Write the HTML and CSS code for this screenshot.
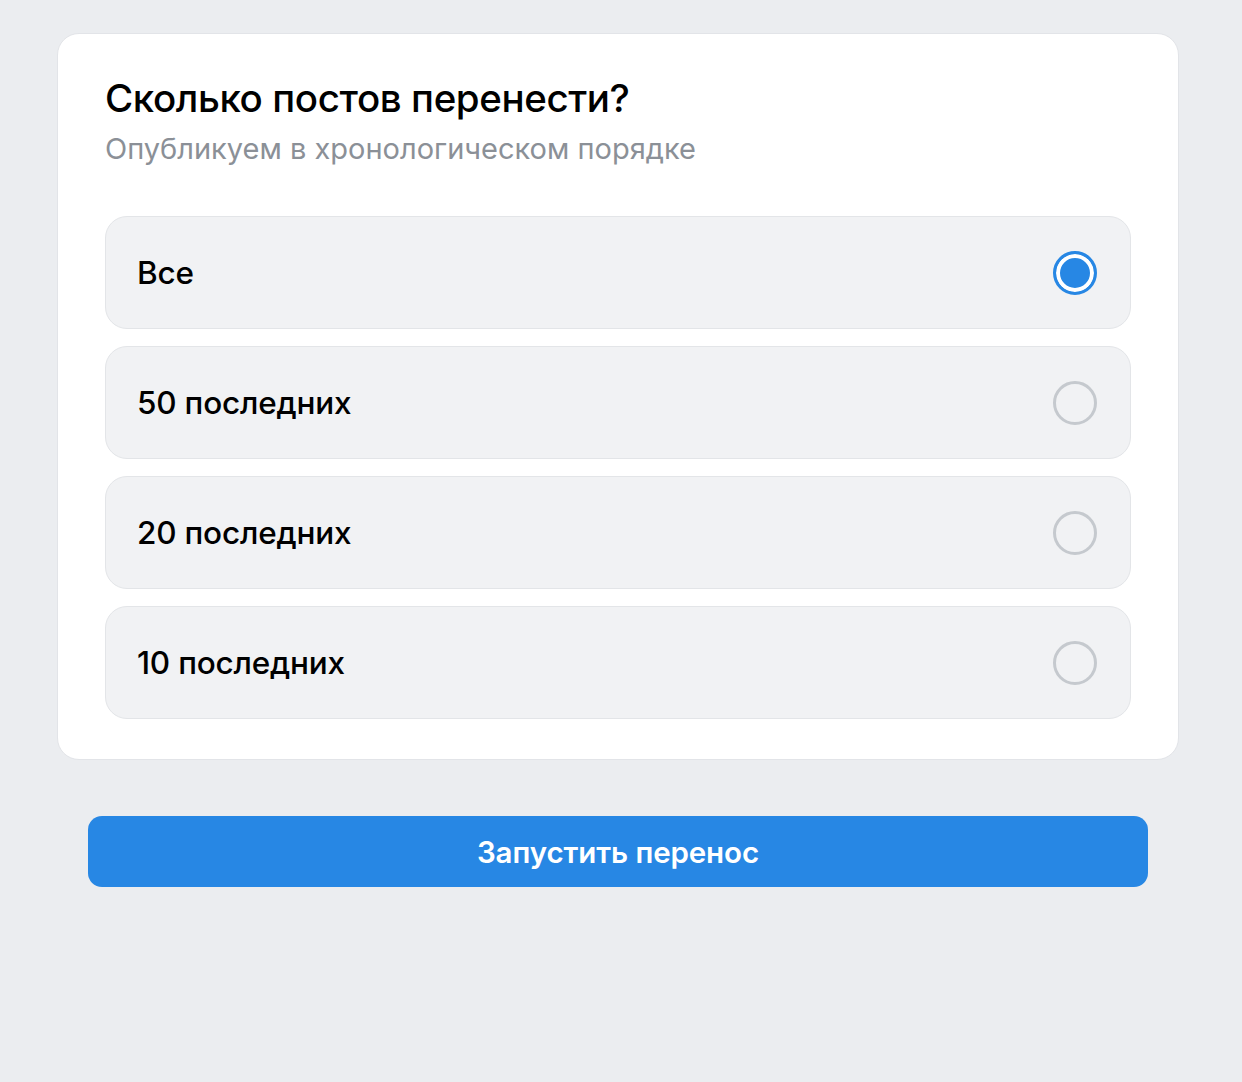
FILE: index.html
```html
<!DOCTYPE html>
<html lang="ru">
<head>
<meta charset="utf-8">
<title>Перенос постов</title>
<link rel="stylesheet" href="styles.css">
</head>
<body>
<main class="page">
  <section class="card">
    <h1 class="title">Сколько постов перенести?</h1>
    <p class="subtitle">Опубликуем в хронологическом порядке</p>
    <div class="options">
      <label class="option">
        <span class="option-label">Все</span>
        <input type="radio" name="count" class="radio-input" checked>
        <span class="radio radio-checked"></span>
      </label>
      <label class="option">
        <span class="option-label">50 последних</span>
        <input type="radio" name="count" class="radio-input">
        <span class="radio"></span>
      </label>
      <label class="option">
        <span class="option-label">20 последних</span>
        <input type="radio" name="count" class="radio-input">
        <span class="radio"></span>
      </label>
      <label class="option">
        <span class="option-label">10 последних</span>
        <input type="radio" name="count" class="radio-input">
        <span class="radio"></span>
      </label>
    </div>
  </section>
  <button class="start-btn" type="button">Запустить перенос</button>
</main>
</body>
</html>
```

FILE: styles.css
```css
html, body {
  margin: 0;
  padding: 0;
  background: #ebedf0;
}
body {
  font-family: Inter, "Noto Sans", "DejaVu Sans", sans-serif;
  color: #000;
}
.page {
  width: 1122px;
  padding: 33px 0 0 57px;
  display: flex;
  flex-direction: column;
}
.card {
  background: #fff;
  border: 1px solid #e2e4e8;
  border-radius: 22px;
  padding: 40px 47px 40px 47px;
}
.title {
  margin: 0;
  font-size: 38.5px;
  line-height: 48px;
  font-weight: 500;
  letter-spacing: -0.4px;
}
.subtitle {
  margin: 8px 0 0;
  font-size: 29px;
  line-height: 38px;
  color: #8b9097;
  font-weight: 400;
}
.options {
  margin-top: 48px;
  display: flex;
  flex-direction: column;
  gap: 17px;
}
.option {
  height: 111px;
  box-sizing: content-box;
  display: flex;
  align-items: center;
  justify-content: space-between;
  background: #f1f2f4;
  border: 1px solid #e3e5e8;
  border-radius: 22px;
  padding: 0 33px 0 31px;
}
.option-label {
  font-size: 31.5px;
  font-weight: 500;
  letter-spacing: -0.2px;
}
.radio-input {
  display: none;
}
.radio {
  width: 44px;
  height: 44px;
  box-sizing: border-box;
  border-radius: 50%;
  border: 3px solid #c5c9ce;
  background: transparent;
}
.radio-checked {
  border-color: #2787e4;
  background: #2787e4;
  box-shadow: inset 0 0 0 4px #fff;
}
.start-btn {
  margin: 56px 31px 0 31px;
  height: 71px;
  border: none;
  border-radius: 14px;
  background: #2787e4;
  color: #fff;
  font-family: Inter, "Noto Sans", "DejaVu Sans", sans-serif;
  font-size: 29.5px;
  font-weight: 600;
  letter-spacing: -0.1px;
  cursor: pointer;
}
```
